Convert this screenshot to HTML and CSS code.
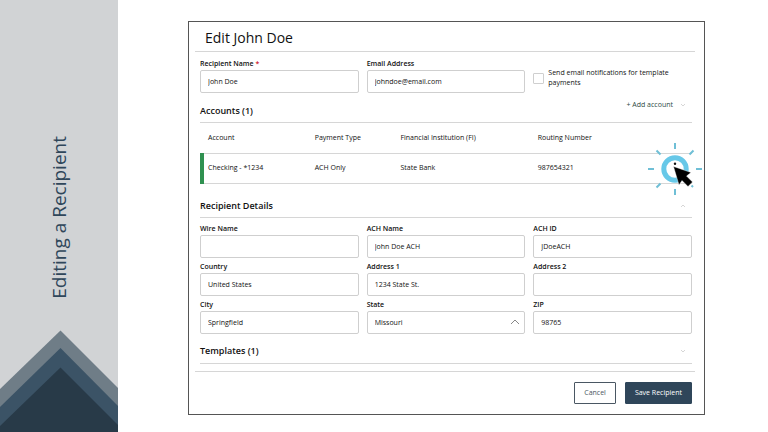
FILE: index.html
```html
<!DOCTYPE html>
<html lang="en">
<head>
    <meta charset="UTF-8">
    <meta name="viewport" content="width=device-width, initial-scale=1.0">
    <title>Editing a Recipient</title>
    <link rel="stylesheet" href="styles.css">
</head>
<body>
    <aside class="sidebar">
        <h1 class="sidebar-title">Editing a Recipient</h1>
        <svg class="peaks" viewBox="0 0 118 102" aria-hidden="true">
            <polygon points="60.5,0.5 118,58 118,102 0,102 0,59" fill="#6f7d87"/>
            <polygon points="60.5,18 118,76 118,102 0,102 0,77" fill="#3b5366"/>
            <polygon points="60.5,37.5 118,95 118,102 0,102 0,96" fill="#283a48"/>
        </svg>
    </aside>

    <main class="main">
        <form class="panel">
            <h2 class="panel-title">Edit John Doe</h2>

            <div class="panel-body">
                <div class="fields">
                    <div class="field">
                        <label for="name">Recipient Name <span class="required">*</span></label>
                        <input type="text" id="name" value="John Doe">
                    </div>
                    <div class="field">
                        <label for="email">Email Address</label>
                        <input type="text" id="email" value="johndoe@email.com">
                    </div>
                    <div class="notify">
                        <input type="checkbox" id="notify">
                        <label for="notify">Send email notifications for template payments</label>
                    </div>
                </div>

                <div class="section-head accounts-head">
                    <h3>Accounts (1)</h3>
                    <button type="button" class="add-account">+ Add account
                        <svg class="chevron" viewBox="0 0 6 4"><path d="M1 1l2 2 2-2"/></svg>
                    </button>
                </div>

                <table class="accounts">
                    <thead>
                        <tr>
                            <th class="col-account">Account</th>
                            <th class="col-type">Payment Type</th>
                            <th class="col-bank">Financial Institution (FI)</th>
                            <th>Routing Number</th>
                            <th class="col-menu"></th>
                        </tr>
                    </thead>
                    <tbody>
                        <tr>
                            <td>Checking - *1234</td>
                            <td>ACH Only</td>
                            <td>State Bank</td>
                            <td>987654321</td>
                            <td>
                                <button type="button" class="menu" aria-label="Account actions">
                                    <svg class="click" viewBox="0 0 56 56">
                                        <circle cx="28" cy="28" r="11.2" fill="none" stroke="#67c8e8" stroke-width="5"/>
                                        <g stroke="#6fbfd6" stroke-width="2">
                                            <path d="M28 2v6M28 48v6M1 28h6M49 28h6M9.500 9.500l4 4M42.500 13.500l4-4M9.500 46.500l4-4"/>
                                            <path d="M44.500 44.500l1.500 1.500"/>
                                        </g>
                                        <circle cx="28" cy="22.700" r="1.200" fill="#111"/>
                                        <path d="M26.500 25.500l17.500 6-4.500 3.500 6 6-4.500 4.500-6-6-3 4.500z" fill="#000" stroke="#fff" stroke-width="0.400"/>
                                    </svg>
                                </button>
                            </td>
                        </tr>
                    </tbody>
                </table>

                <div class="section-head details-head">
                    <h3>Recipient Details</h3>
                    <svg class="chevron" viewBox="0 0 6 4"><path d="M1 3l2-2 2 2"/></svg>
                </div>

                <div class="fields">
                    <div class="field">
                        <label for="wire">Wire Name</label>
                        <input type="text" id="wire">
                    </div>
                    <div class="field">
                        <label for="ach-name">ACH Name</label>
                        <input type="text" id="ach-name" value="John Doe ACH">
                    </div>
                    <div class="field">
                        <label for="ach-id">ACH ID</label>
                        <input type="text" id="ach-id" value="JDoeACH">
                    </div>
                    <div class="field">
                        <label for="country">Country</label>
                        <input type="text" id="country" value="United States">
                    </div>
                    <div class="field">
                        <label for="address1">Address 1</label>
                        <input type="text" id="address1" value="1234 State St.">
                    </div>
                    <div class="field">
                        <label for="address2">Address 2</label>
                        <input type="text" id="address2">
                    </div>
                    <div class="field">
                        <label for="city">City</label>
                        <input type="text" id="city" value="Springfield">
                    </div>
                    <div class="field">
                        <label for="state">State</label>
                        <div class="select">
                            <select id="state">
                                <option>Missouri</option>
                            </select>
                            <svg viewBox="0 0 10 6"><path d="M1 5l4-4 4 4"/></svg>
                        </div>
                    </div>
                    <div class="field">
                        <label for="zip">ZIP</label>
                        <input type="text" id="zip" value="98765">
                    </div>
                </div>

                <div class="section-head templates-head">
                    <h3>Templates (1)</h3>
                    <svg class="chevron" viewBox="0 0 6 4"><path d="M1 1l2 2 2-2"/></svg>
                </div>
            </div>

            <div class="actions">
                <button type="button" class="btn">Cancel</button>
                <button type="submit" class="btn btn-primary">Save Recipient</button>
            </div>
        </form>
    </main>
</body>
</html>
```

FILE: styles.css
```css
:root {
    --navy: #2f465a;
    --text: #111;
    --line: #d6d6d6;
    --sidebar: #d1d3d5;
}

* {
    box-sizing: border-box;
}

body {
    margin: 0;
    min-height: 100vh;
    display: flex;
    background: white;
    color: var(--text);
    font-family: "Open Sans", "Noto Sans", sans-serif;
    font-size: 7px;
    line-height: 10px;
}

h1, h2, h3 {
    margin: 0;
}

button, input, select {
    font: inherit;
    color: inherit;
}

.sidebar {
    width: 118px;
    flex-shrink: 0;
    display: flex;
    flex-direction: column;
    align-items: center;
    justify-content: flex-end;
    background: var(--sidebar);
}

.sidebar-title {
    writing-mode: vertical-rl;
    transform: rotate(180deg);
    margin-bottom: 31px;
    color: var(--navy);
    font-size: 19px;
    font-weight: 400;
    line-height: 26px;
}

.peaks {
    display: block;
    width: 100%;
}

.main {
    flex: 1;
    padding: 21px 63px 17px 70px;
}

.panel {
    padding: 0 9px 10px 6px;
    border: 1px solid #555;
}

.panel-title {
    padding: 6px 10px 3px;
    border-bottom: 1px solid var(--line);
    font-size: 14px;
    font-weight: 400;
    line-height: 20px;
}

.panel-body {
    padding: 7px 3px 7px 5px;
}

.fields {
    display: grid;
    grid-template-columns: repeat(3, 1fr);
    gap: 4px 8px;
}

.field label {
    display: block;
    margin-bottom: 1px;
    font-weight: 600;
}

.required {
    color: #d0202e;
}

.field input,
.field select {
    display: block;
    width: 100%;
    height: 23px;
    padding: 0 7px;
    border: 1px solid #cfcfcf;
    border-radius: 2px;
    background: white;
}

.field select {
    appearance: none;
    padding-top: 1px;
}

.select {
    position: relative;
}

.select svg {
    position: absolute;
    top: 8px;
    right: 5px;
    width: 10px;
    fill: none;
    stroke: #888;
    pointer-events: none;
}

.notify {
    display: flex;
    align-items: center;
    gap: 4px;
    padding-top: 4px;
}

.notify input {
    appearance: none;
    flex-shrink: 0;
    width: 11px;
    height: 11px;
    margin: 0;
    border: 1px solid #cfcfcf;
    border-radius: 1px;
}

.notify label {
    max-width: 130px;
}

.section-head {
    display: flex;
    align-items: center;
    justify-content: space-between;
    padding-right: 6px;
    border-bottom: 1px solid var(--line);
}

.section-head h3 {
    font-size: 9px;
    font-weight: 600;
    line-height: 12px;
}

.chevron {
    width: 6px;
    fill: none;
    stroke: #bbb;
    stroke-width: 0.6;
}

.accounts-head {
    align-items: flex-start;
    padding-top: 6px;
}

.accounts-head h3 {
    padding: 6px 0 5px;
}

.add-account {
    display: flex;
    align-items: center;
    gap: 7px;
    margin: 1px 0 0;
    padding: 0;
    border: 0;
    background: none;
    color: #2e4a45;
}

.accounts {
    width: 100%;
    table-layout: fixed;
    border-collapse: collapse;
}

.accounts th,
.accounts td {
    height: 30px;
    padding: 0;
    border-bottom: 1px solid var(--line);
    font-weight: 400;
    text-align: left;
}

.accounts th:first-child {
    padding-left: 6px;
}

.accounts td:first-child {
    padding-left: 4px;
    border-left: 4px solid #2f9150;
}

.col-account {
    width: 23%;
}

.col-type {
    width: 17.5%;
}

.col-bank {
    width: 28%;
}

.col-menu {
    width: 34px;
}

.menu {
    position: relative;
    display: block;
    width: 34px;
    height: 28px;
    padding: 0;
    border: 0;
    background: none;
}

.click {
    position: absolute;
    top: -13px;
    left: -11px;
    width: 56px;
    height: 56px;
}

.details-head {
    margin-bottom: 6px;
    padding-top: 16px;
    padding-bottom: 5px;
}

.templates-head {
    padding-top: 11px;
    padding-bottom: 6px;
}

.actions {
    display: flex;
    justify-content: flex-end;
    gap: 9px;
    padding: 10px 3px 0;
    border-top: 1px solid var(--line);
}

.btn {
    height: 22px;
    padding: 0 9px;
    border: 1px solid #4a5763;
    border-radius: 1px;
    background: white;
    color: #4a5763;
}

.btn-primary {
    border-color: var(--navy);
    background: var(--navy);
    color: white;
}
```
